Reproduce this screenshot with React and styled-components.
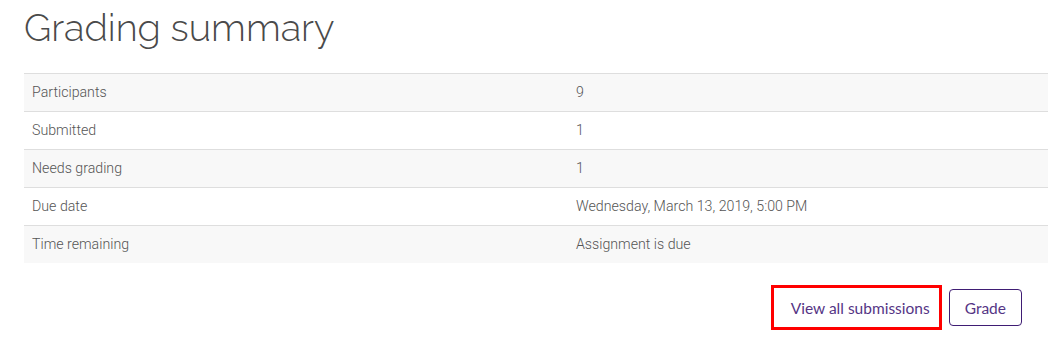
import styled, { createGlobalStyle } from "styled-components";

const Global = createGlobalStyle`
  body {
    margin: 0;
    background: #fff;
    font-family: Roboto, "Liberation Sans", sans-serif;
  }
`;

const Page = styled.div`
  padding: 0 0 0 24px;
  width: 1048px;
  box-sizing: border-box;
  overflow: hidden;
`;

const Title = styled.h2`
  margin: 0;
  padding-top: 4px;
  height: 69px;
  font-family: Raleway, Lato, "Open Sans", sans-serif;
  font-weight: 300;
  font-size: 38px;
  line-height: 48px;
  color: #4a4a4a;
`;

const Table = styled.div`
  width: 1040px;
`;

const Row = styled.div`
  display: grid;
  grid-template-columns: 544px 1fr;
  height: 36px;
  padding-bottom: 1px;
  border-top: 1px solid #dedede;
  background: ${({ $striped }) => ($striped ? "#f8f8f8" : "#fff")};
  align-items: center;
  font-size: 14.2px;
  font-weight: 300;
  color: #555;
`;

const Cell = styled.div`
  padding: 0 8px;
  white-space: nowrap;
`;

const Actions = styled.div`
  display: flex;
  justify-content: flex-end;
  align-items: center;
  gap: 7px;
  padding: 22px 26px 0 0;
`;

const Button = styled.button`
  font-family: "Source Sans Pro", Lato, "Liberation Sans", sans-serif;
  font-size: 15.5px;
  color: #553585;
  background: #fff;
  border-radius: ${({ $highlight }) => ($highlight ? "0" : "4px")};
  border: ${({ $highlight }) =>
    $highlight ? "3px solid #ff0000" : "1px solid #3f1d74"};
  height: ${({ $highlight }) => ($highlight ? "45px" : "37px")};
  padding: ${({ $highlight }) => ($highlight ? "0 9px 0 17px" : "0 15px")};
  cursor: pointer;
`;

const rows = [
  ["Participants", "9"],
  ["Submitted", "1"],
  ["Needs grading", "1"],
  ["Due date", "Wednesday, March 13, 2019, 5:00 PM"],
  ["Time remaining", "Assignment is due"],
];

export default function App() {
  return (
    <Page>
      <Global />
      <Title>Grading summary</Title>
      <Table>
        {rows.map(([label, value], i) => (
          <Row key={label} $striped={i % 2 === 0}>
            <Cell>{label}</Cell>
            <Cell>{value}</Cell>
          </Row>
        ))}
      </Table>
      <Actions>
        <Button $highlight>View all submissions</Button>
        <Button>Grade</Button>
      </Actions>
    </Page>
  );
}
